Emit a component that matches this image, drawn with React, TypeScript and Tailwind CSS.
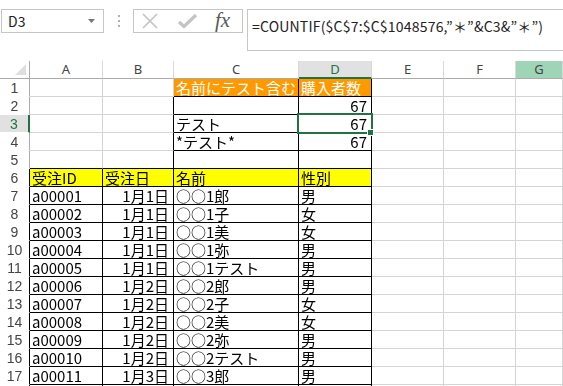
import React from "react";
import clsx from "clsx";

const COLS = ["A", "B", "C", "D", "E", "F", "G"];

const data: Record<number, string[]> = {
  1: ["", "", "名前にテスト含む", "購入者数"],
  2: ["", "", "", "67"],
  3: ["", "", "テスト", "67"],
  4: ["", "", "*テスト*", "67"],
  6: ["受注ID", "受注日", "名前", "性別"],
  7: ["a00001", "1月1日", "○○1郎", "男"],
  8: ["a00002", "1月1日", "○○1子", "女"],
  9: ["a00003", "1月1日", "○○1美", "女"],
  10: ["a00004", "1月1日", "○○1弥", "男"],
  11: ["a00005", "1月1日", "○○1テスト", "男"],
  12: ["a00006", "1月2日", "○○2郎", "男"],
  13: ["a00007", "1月2日", "○○2子", "女"],
  14: ["a00008", "1月2日", "○○2美", "女"],
  15: ["a00009", "1月2日", "○○2弥", "男"],
  16: ["a00010", "1月2日", "○○2テスト", "男"],
  17: ["a00011", "1月3日", "○○3郎", "男"],
  18: ["", "", "", ""],
};

const ROWS = Array.from({ length: 18 }, (_, i) => i + 1);

// cells that carry black borders on all sides
const bordered = (r: number, c: number) =>
  (r >= 2 && r <= 5 && (c === 2 || c === 3)) || (r >= 6 && c <= 3);

function DataCell({ r, c }: { r: number; c: number }) {
  const text = data[r]?.[c] ?? "";
  const rightBlack = bordered(r, c) || bordered(r, c + 1) || (r === 1 && (c === 2 || c === 3));
  const bottomBlack = bordered(r, c) || bordered(r + 1, c);
  const orange = r === 1 && (c === 2 || c === 3);
  const yellow = r === 6 && c <= 3;
  const alignRight = (c === 1 && r >= 7) || (c === 3 && r >= 2 && r <= 4);
  return (
    <div
      className={clsx(
        "h-[18px] border-r border-b whitespace-nowrap leading-[18px] text-[15px]",
        rightBlack ? "border-r-black" : "border-r-[#d4d4d4]",
        bottomBlack ? "border-b-black" : "border-b-[#d4d4d4]",
        orange ? "bg-[#ff9900] text-white overflow-x-hidden" : yellow ? "bg-[#ffff00] text-black" : "bg-white text-black",
        alignRight ? "text-right pr-[4px]" : "pl-[2px]"
      )}
    >
      {text}
    </div>
  );
}

function RowHeader({ r }: { r: number }) {
  const sel = r === 3;
  return (
    <div
      className={clsx(
        "h-[18px] border-b border-b-white flex items-center justify-center text-[14px] leading-none",
        sel
          ? "bg-[#e1e1e1] border-r-2 border-r-[#217346] text-[#217346]"
          : bordered(r, 0)
          ? "bg-white border-r border-r-black text-[#444]"
          : "bg-white border-r border-r-[#ababab] text-[#444]"
      )}
      style={{ fontFamily: '"Liberation Sans", sans-serif' }}
    >
      {r}
    </div>
  );
}

function ColHeader({ name }: { name: string }) {
  return (
    <div
      className={clsx(
        "h-[18px] border-r border-r-[#d9d9d9] flex items-center justify-center text-[13px] leading-none",
        name === "D"
          ? "bg-[#e1e1e1] border-b-2 border-b-[#217346] text-[#217346]"
          : name === "G"
          ? "bg-[#9fd5b7] border-b border-b-[#ababab] text-[#444]"
          : "bg-white border-b border-b-[#ababab] text-[#444]"
      )}
      style={{ fontFamily: '"Noto Sans", sans-serif' }}
    >
      {name}
    </div>
  );
}

function TopBar() {
  return (
    <div className="h-[61px] flex items-start pt-[9px] bg-white">
      <div className="ml-[1px] w-[103px] h-[24px] border border-[#c6c6c6] flex items-center justify-between pl-[6px] pr-[8px]">
        <span className="text-[14px] text-[#222]">D3</span>
        <svg width="7" height="4" viewBox="0 0 7 4">
          <path d="M0 0 L7 0 L3.5 4 Z" fill="#777" />
        </svg>
      </div>
      <div className="w-[29px] h-[24px] flex flex-col items-center justify-center gap-[3px]">
        <span className="w-[2px] h-[2px] bg-[#b0b0b0]" />
        <span className="w-[2px] h-[2px] bg-[#b0b0b0]" />
        <span className="w-[2px] h-[2px] bg-[#b0b0b0]" />
      </div>
      <div className="w-[110px] h-[24px] border border-[#c6c6c6] flex items-center pl-[7px]">
        <svg width="18" height="16" viewBox="0 0 18 16">
          <path d="M2 1 L16 15 M16 1 L2 15" stroke="#c4c4c4" strokeWidth="1.7" />
        </svg>
        <svg width="20" height="16" viewBox="0 0 20 16" className="ml-[19px]">
          <path d="M1 9 L6 13.5 L18 2" stroke="#c4c4c4" strokeWidth="3.2" fill="none" />
        </svg>
        <span
          className="ml-[17px] text-[21px] leading-none italic text-[#595959] -mt-[2px]"
          style={{ fontFamily: '"Liberation Serif", serif' }}
        >
          fx
        </span>
      </div>
      <div className="ml-[4px] flex-1 h-[42px] border-t border-l border-b border-[#c6c6c6] pl-[4px] pt-[3px]">
        <span className="text-[14px] text-[#222] whitespace-nowrap tracking-[0.2px]">
          =COUNTIF($C$7:$C$1048576,”＊”&amp;C3&amp;”＊”)
        </span>
      </div>
    </div>
  );
}

export default function App() {
  return (
    <div
      className="w-[563px] h-[386px] overflow-hidden bg-white"
      style={{ fontFamily: '"Noto Sans CJK JP", sans-serif' }}
    >
      <TopBar />
      <div className="relative">
        <div className="grid grid-cols-[30px_73px_71px_125px_73px_72px_72px_1fr]">
          <div className="h-[18px] border-r border-r-[#ababab] border-b border-b-[#ababab] bg-white flex items-end justify-end pr-[3px] pb-[3px]">
            <svg width="11" height="11" viewBox="0 0 11 11">
              <path d="M11 0 L11 11 L0 11 Z" fill="#dfdfdf" />
            </svg>
          </div>
          {COLS.map((c) => (
            <ColHeader key={c} name={c} />
          ))}
          {ROWS.map((r) => (
            <React.Fragment key={r}>
              <RowHeader r={r} />
              {COLS.map((_, c) => (
                <DataCell key={c} r={r} c={c} />
              ))}
            </React.Fragment>
          ))}
        </div>
        <div className="absolute left-[297px] top-[52px] w-[76px] h-[21px] border-2 border-[#217346]" />
        <div className="absolute left-[367px] top-[68px] w-[7px] h-[7px] bg-[#217346] border border-white" />
      </div>
    </div>
  );
}
